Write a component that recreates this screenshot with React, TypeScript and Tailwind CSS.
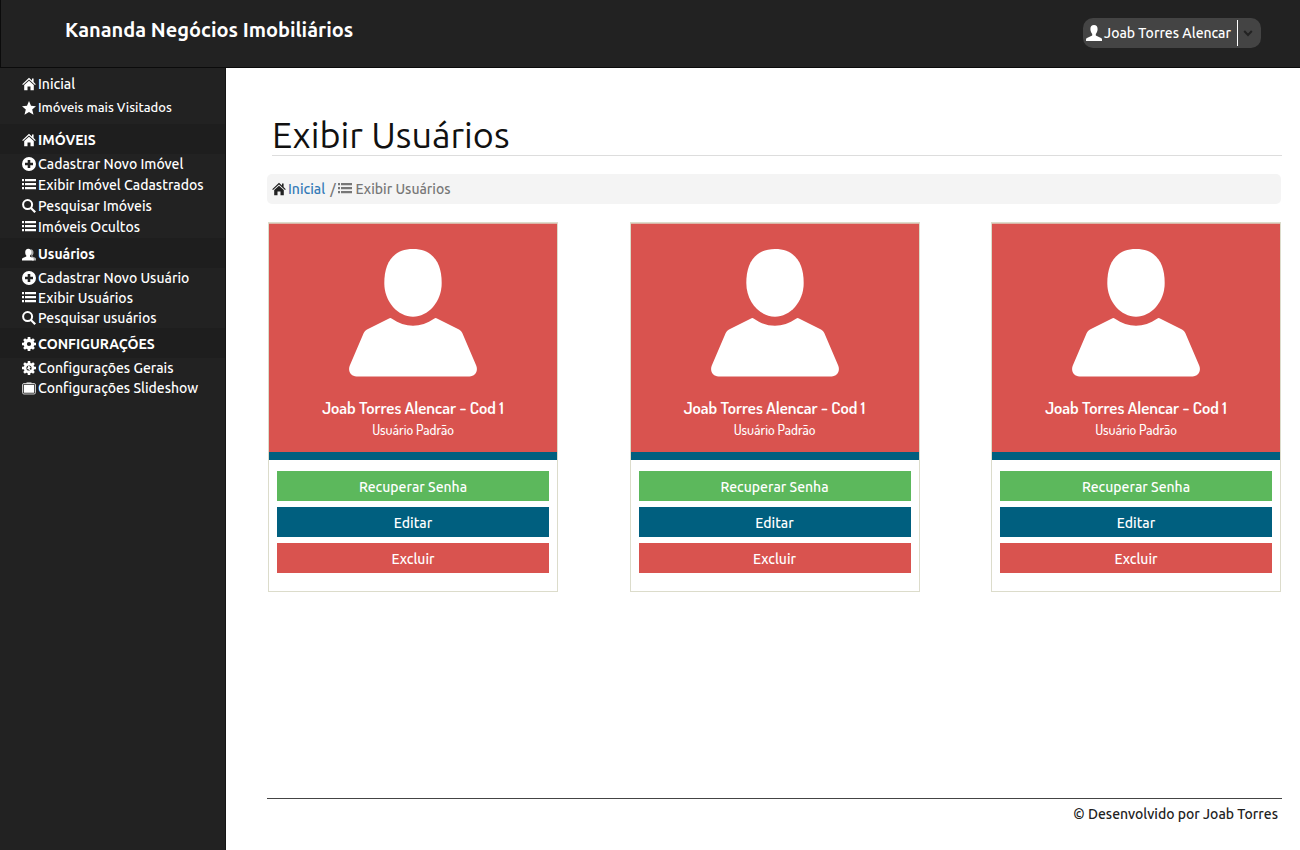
import React from "react";

type IconProps = { className?: string };

const svgProps = { viewBox: "0 0 14 14", fill: "currentColor", "aria-hidden": true } as const;

const HomeIcon = ({ className = "size-[14px]" }: IconProps) => (
  <svg {...svgProps} className={className}>
    <path d="M7 .8 .2 7.200l.8.8L7 2.400 13 8l.8-.8L11.600 5.100V1.500H10v2.100Z" />
    <path d="M7 3.700 2.200 8v5.200h3.300V9.400h3v3.800h3.300V8Z" />
  </svg>
);

const StarIcon = ({ className = "size-[14px]" }: IconProps) => (
  <svg {...svgProps} className={className}>
    <path d="M7 0l2 4.800 5 .4-3.800 3.300 1.300 5.300L7 11l-4.500 2.800 1.300-5.300L0 5.200l5-.4Z" />
  </svg>
);

const PlusIcon = ({ className = "size-[14px]" }: IconProps) => (
  <svg {...svgProps} className={className}>
    <path
      fillRule="evenodd"
      d="M7 0a7 7 0 1 0 0 14A7 7 0 0 0 7 0ZM5.700 3h2.600v2.700H11v2.600H8.300V11H5.700V8.300H3V5.700h2.700Z"
    />
  </svg>
);

const ListIcon = ({ className = "size-[14px]" }: IconProps) => (
  <svg {...svgProps} className={className}>
    <path d="M0 1h2v2.300H0zM3 1h11v2.300H3zM0 5h2v2.300H0zM3 5h11v2.300H3zM0 9h2v2.300H0zM3 9h11v2.300H3z" />
  </svg>
);

const SearchIcon = ({ className = "size-[14px]" }: IconProps) => (
  <svg {...svgProps} className={className}>
    <circle cx="5.600" cy="5.600" r="4.500" fill="none" stroke="currentColor" strokeWidth="2" />
    <path d="M8.200 9.700 9.700 8.200l4.300 4.200-1.600 1.600Z" />
  </svg>
);

const UsersIcon = ({ className = "size-[14px]" }: IconProps) => (
  <svg {...svgProps} className={className}>
    <path
      opacity=".65"
      d="M8.500 2.200c2 0 3 1.300 3 3.200 0 1.300-.5 2.400-1.200 3v1l3 1.400c.5.200.7.600.7 1.200v1.500h-4Z"
    />
    <path d="M6.300 1.800c1.900 0 3.100 1.400 3.100 3.500 0 1.400-.6 2.600-1.300 3.200v1.200l3 1.300c.5.200.7.600.7 1.200V13.500H0v-1.300c0-.6.300-1 .8-1.200l3.500-1.400V8.500C3.600 7.900 3.200 6.700 3.200 5.300c0-2.100 1.200-3.500 3.100-3.500Z" />
  </svg>
);

const teeth = [0, 45, 90, 135, 180, 225, 270, 315];

const CogIcon = ({ className = "size-[14px]" }: IconProps) => (
  <svg {...svgProps} className={className}>
    {teeth.map((a) => (
      <path key={a} d="M5.400 3 5.700 0h2.600l.3 3Z" transform={`rotate(${a} 7 7)`} />
    ))}
    <circle cx="7" cy="7" r="3.700" fill="none" stroke="currentColor" strokeWidth="3.200" />
  </svg>
);

const WrenchCogIcon = ({ className = "size-[14px]" }: IconProps) => (
  <svg {...svgProps} className={className}>
    {teeth.map((a) => (
      <path key={a} d="M5.500 3 5.800 0h2.400l.3 3Z" transform={`rotate(${a} 7 7)`} />
    ))}
    <circle cx="7" cy="7" r="3.900" fill="none" stroke="currentColor" strokeWidth="2.600" />
    <path d="M6.500 4.500 8.800 6.200 7.600 7.700 11.500 11.300 10.600 12.200 6.900 8.400 5.100 8.100Z" />
  </svg>
);

const SlidesIcon = ({ className = "size-[14px]" }: IconProps) => (
  <svg {...svgProps} className={className}>
    <rect x=".5" y="2.500" width="13" height="10.500" rx="1.500" fill="none" stroke="currentColor" opacity=".75" />
    <path d="M4.500 1.500h5v1h-5zM1.800 3.800h10.400v8H1.800z" />
  </svg>
);

const UserIcon = ({ className = "size-4" }: IconProps) => (
  <svg viewBox="0 0 16 16" fill="currentColor" aria-hidden className={className}>
    <path d="M8 0c2.300 0 3.600 1.500 3.600 4 0 2-.8 3.900-1.800 5v1.600l5.200 2.300c.6.300 1 .8 1 1.500V16H0v-1.600c0-.7.400-1.200 1-1.500l5.200-2.300V9c-1-1.100-1.800-3-1.800-5C4.400 1.500 5.700 0 8 0Z" />
  </svg>
);

const Avatar = () => (
  <svg viewBox="0 0 128 128" className="size-32" fill="#fff" role="img" aria-label="Foto do usuário">
    <path d="M64 0C84 0 92.700 14 92.700 34 92.700 53 79 67.700 64 67.700S35.300 53 35.300 34C35.300 14 44 0 64 0Z" />
    <path d="M40 69.400Q41.500 68.600 43 69.800C56 79 72 79 85 69.800Q86.500 68.600 88 69.400L110 80.600Q112.300 81.800 113.300 84L127.200 116.500C129.500 122 126 127.400 120.500 127.400H7.500C2 127.400-1.500 122 .8 116.500L14.700 84Q15.700 81.800 18 80.600Z" />
  </svg>
);

type Item = { label: string; Icon: (p: IconProps) => React.ReactElement };

const top: Item[] = [
  { label: "Inicial", Icon: HomeIcon },
  { label: "Imóveis mais Visitados", Icon: StarIcon },
];

const sections: { title: string; Icon: Item["Icon"]; row: string; items: Item[] }[] = [
  {
    title: "IMÓVEIS",
    Icon: HomeIcon,
    row: "h-[21px] pb-px text-sm",
    items: [
      { label: "Cadastrar Novo Imóvel", Icon: PlusIcon },
      { label: "Exibir Imóvel Cadastrados", Icon: ListIcon },
      { label: "Pesquisar Imóveis", Icon: SearchIcon },
      { label: "Imóveis Ocultos", Icon: ListIcon },
    ],
  },
  {
    title: "Usuários",
    Icon: UsersIcon,
    row: "h-5 text-sm",
    items: [
      { label: "Cadastrar Novo Usuário", Icon: PlusIcon },
      { label: "Exibir Usuários", Icon: ListIcon },
      { label: "Pesquisar usuários", Icon: SearchIcon },
    ],
  },
  {
    title: "CONFIGURAÇÕES",
    Icon: CogIcon,
    row: "h-5 text-sm",
    items: [
      { label: "Configurações Gerais", Icon: WrenchCogIcon },
      { label: "Configurações Slideshow", Icon: SlidesIcon },
    ],
  },
];

const NavLink = ({ item, row }: { item: Item; row: string }) => (
  <li>
    <a href="#" className={`flex items-center gap-0.5 whitespace-nowrap pl-[22px] ${row}`}>
      <item.Icon />
      {item.label}
    </a>
  </li>
);

const Sidebar = () => (
  <nav className="w-[226px] shrink-0 border-r border-[#151515] bg-[#222] font-medium text-white">
    <ul className="py-1">
      {top.map((i, n) => (
        <NavLink key={i.label} item={i} row={n === 0 ? "h-6 text-sm" : "h-6 text-[13px]"} />
      ))}
    </ul>
    {sections.map((s) => (
      <section key={s.title}>
        <h2 className="flex h-[30px] items-center gap-0.5 bg-[#1e1e1e] pt-0.5 pl-[22px] text-sm font-bold">
          <s.Icon />
          {s.title}
        </h2>
        <ul>
          {s.items.map((i) => (
            <NavLink key={i.label} item={i} row={s.row} />
          ))}
        </ul>
      </section>
    ))}
  </nav>
);

const buttonBase = "h-[30px] w-full cursor-pointer pt-px text-sm font-medium text-white";

const UserCard = ({ name, code, role }: { name: string; code: number; role: string }) => (
  <article className="w-[290px] border border-[#dcdccb]">
    <div className="flex h-[229px] flex-col items-center border-t border-[#dbb5a8] bg-[#d9534f] pt-[25px] text-white">
      <Avatar />
      <h3 className="mt-[19px] text-[17px] leading-6 font-semibold font-['Dosis','Liberation_Sans_Narrow',Roboto,sans-serif]">
        {name} - Cod {code}
      </h3>
      <p className="text-sm leading-5 font-medium font-['Dosis','Liberation_Sans_Narrow',Roboto,sans-serif]">
        {role}
      </p>
    </div>
    <div className="h-2 bg-[#005f7f]" />
    <div className="flex flex-col gap-1.5 px-2 pt-[11px] pb-[18px]">
      <button type="button" className={`${buttonBase} bg-[#5cb85c]`}>
        Recuperar Senha
      </button>
      <button type="button" className={`${buttonBase} bg-[#005f7f]`}>
        Editar
      </button>
      <button type="button" className={`${buttonBase} bg-[#d9534f]`}>
        Excluir
      </button>
    </div>
  </article>
);

const users = [0, 1, 2].map((id) => ({ id, name: "Joab Torres Alencar", code: 1, role: "Usuário Padrão" }));

export default function App() {
  return (
    <div className="flex min-h-screen flex-col bg-white font-['Ubuntu','Noto_Sans',sans-serif]">
      <header className="flex h-[68px] items-start justify-between border-b border-l border-[#0b0b0b] bg-[#222] pt-[18px] pr-[39px] pl-16 text-white">
        <p className="text-xl leading-6 font-bold">Kananda Negócios Imobiliários</p>
        <button
          type="button"
          aria-haspopup="menu"
          className="flex h-[30px] cursor-pointer items-center rounded-[10px] bg-[#444] pr-2 pl-[3px] text-sm font-medium"
        >
          <UserIcon />
          <span className="ml-0.5">Joab Torres Alencar</span>
          <span className="mr-[5px] ml-1.5 h-[26px] w-px bg-white" />
          <svg viewBox="0 0 10 10" className="size-[10px]" fill="none" stroke="#222" strokeWidth="2" aria-hidden>
            <path d="M1.200 3 5 7l3.800-4" />
          </svg>
        </button>
      </header>
      <div className="flex grow">
        <Sidebar />
        <div className="flex min-w-0 grow flex-col pr-[18px] pl-[41px]">
          <main className="pt-[46px]">
            <h1 className="ml-[5px] border-b border-[#ddd] text-[36px] leading-[41px] text-[#111]">
              Exibir Usuários
            </h1>
            <nav
              aria-label="Trilha"
              className="mt-[18px] mr-px flex h-[30px] items-center rounded-[5px] bg-[#f4f4f4] pl-[5px] text-sm font-medium text-[#777]"
            >
              <HomeIcon className="size-[14px] text-[#222]" />
              <a href="#" className="ml-0.5 text-[#337ab7]">
                Inicial
              </a>
              <span className="mr-0.5 ml-[5px]">/</span>
              <ListIcon />
              <span className="ml-1">Exibir Usuários</span>
            </nav>
            <div className="mt-[18px] mr-px ml-px flex flex-wrap justify-between gap-y-6">
              {users.map((u) => (
                <UserCard key={u.id} name={u.name} code={u.code} role={u.role} />
              ))}
            </div>
          </main>
          <footer className="mt-auto h-[52px] border-t border-[#444] pt-[5px] pr-1 text-right text-sm font-medium text-[#222]">
            © Desenvolvido por Joab Torres
          </footer>
        </div>
      </div>
    </div>
  );
}
